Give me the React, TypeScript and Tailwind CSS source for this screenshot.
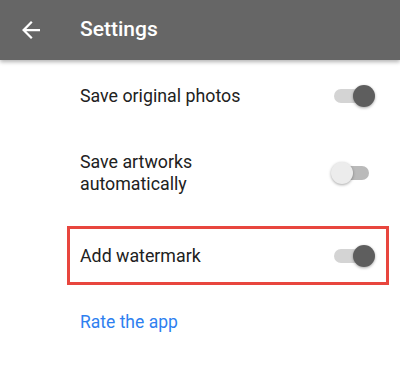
import React from 'react';

function Toggle({ on }: { on: boolean }) {
  return (
    <div className="relative w-[44px] h-[24px] flex-shrink-0">
      <div
        className={`absolute left-[3px] top-[5px] w-[35px] h-[14px] rounded-full ${
          on ? 'bg-[#d4d4d4]' : 'bg-[#bababa]'
        }`}
      />
      <div
        className={`absolute top-[1px] w-[22px] h-[22px] rounded-full shadow-[0_1px_3px_rgba(0,0,0,0.35)] ${
          on ? 'right-0 bg-[#5e5e5e]' : 'left-0 bg-[#ececec]'
        }`}
      />
    </div>
  );
}

interface RowProps {
  children: React.ReactNode;
  on: boolean;
  highlight?: boolean;
  className?: string;
}

function Row({ children, on, highlight = false, className = '' }: RowProps) {
  return (
    <div
      className={`flex items-center justify-between pl-[10px] pr-[11px] border-[3px] ${
        highlight ? 'border-[#e8463e]' : 'border-transparent'
      } ${className}`}
    >
      <div className="text-[17.8px] leading-[22px] text-[#212121]">{children}</div>
      <Toggle on={on} />
    </div>
  );
}

export default function App() {
  return (
    <div className="w-[400px] h-[375px] bg-white overflow-hidden font-['Roboto',sans-serif]">
      {/* Toolbar */}
      <div className="h-[60px] bg-[#666666] flex items-center shadow-[0_2px_4px_rgba(0,0,0,0.3)] relative z-10">
        <div className="w-[80px] flex items-center pl-[22px]">
          <svg width="18" height="18" viewBox="0 0 16 16" fill="white">
            <path d="M16 7H3.83l5.59-5.59L8 0 0 8l8 8 1.41-1.41L3.83 9H16z" />
          </svg>
        </div>
        <span className="text-white text-[21px] font-medium">Settings</span>
      </div>

      {/* Settings list */}
      <div className="ml-[67px] mr-[11px]">
        <Row on className="mt-[7px] h-[58px]">
          Save original photos
        </Row>
        <Row on={false} className="h-[96px]">
          Save artworks
          <br />
          automatically
        </Row>
        <Row on highlight className="mt-[5px] h-[59px]">
          Add watermark
        </Row>
        <div className="mt-[8px] h-[58px] flex items-center pl-[13px]">
          <span className="text-[17.5px] text-[#2e7ff0]">Rate the app</span>
        </div>
      </div>
    </div>
  );
}
